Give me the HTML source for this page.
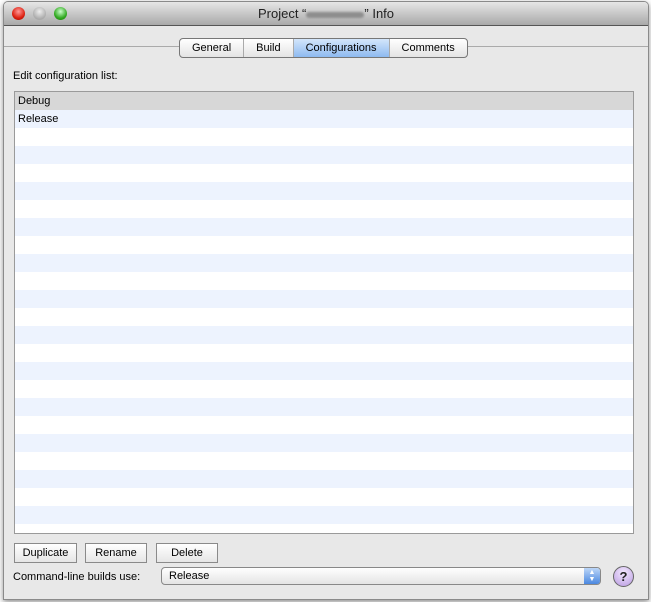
<!DOCTYPE html><html><head><style>
body{margin:0;width:651px;height:602px;background:#fff;font-family:"Liberation Sans",sans-serif;font-size:11px;position:relative;overflow:hidden}
.win{position:absolute;left:3px;top:1px;width:644px;height:597px;background:#e8e8e8;border:1px solid #8a8a8a;border-radius:5px 5px 0 0;box-shadow:0 2px 6px rgba(0,0,0,.45);overflow:hidden}
.tb{position:absolute;left:0;top:0;right:0;height:23px;background:linear-gradient(#e6e6e6,#a9a9a9);border-bottom:1px solid #555;text-align:center;line-height:23px;font-size:13px;color:#222}
.dot{position:absolute;top:5px;width:13px;height:13px;border-radius:50%}
.abs{position:absolute}
.tabs{position:absolute;left:175px;top:36px;height:18px;border:1px solid #777;border-radius:4px;background:linear-gradient(#fff,#e4e4e4);display:flex}
.tabs div{padding:0 12px;line-height:18px;border-left:1px solid #aaa}
.tabs div:first-child{border-left:none}
.tabs .sel{background:linear-gradient(#d4e6fb,#8ebaf0);}
.list{position:absolute;left:10px;top:89px;width:618px;height:441px;border:1px solid #9a9a9a;background:repeating-linear-gradient(#edf3fe 0 18px,#fff 18px 36px);background-position:0 18px;overflow:hidden}
.hdr{height:18px;background:#d7d7d7;line-height:18px;padding-left:3px}
.btn{position:absolute;top:541px;height:18px;border:1px solid #8a8a8a;background:linear-gradient(#fff,#e6e6e6);text-align:center;line-height:18px}
</style></head><body><div class="win">
<div class="tb">Project “<span style="display:inline-block;width:58px;height:6px;background:#8e8e8e;border-radius:3px;vertical-align:middle;filter:blur(1px)"></span>” Info</div>
<div class="dot" style="left:8px;background:radial-gradient(circle at 50% 35%,#f99,#d21 60%,#900)"></div>
<div class="dot" style="left:29px;background:radial-gradient(circle at 50% 35%,#eee,#aaa 70%)"></div>
<div class="dot" style="left:50px;background:radial-gradient(circle at 50% 35%,#cfc,#3a2 60%,#170)"></div>
<div class="abs" style="left:0;right:0;top:44px;border-top:1px solid #aaa"></div>
<div class="tabs"><div>General</div><div>Build</div><div class="sel">Configurations</div><div>Comments</div></div>
<div class="abs" style="left:9px;top:68px">Edit configuration list:</div>
<div class="list"><div class="hdr">Debug</div><div style="padding-left:3px;line-height:18px">Release</div></div>
<div class="btn" style="left:10px;width:61px">Duplicate</div>
<div class="btn" style="left:81px;width:60px">Rename</div>
<div class="btn" style="left:152px;width:60px">Delete</div>
<div class="abs" style="left:9px;top:569px">Command-line builds use:</div>
<div class="abs" style="left:157px;top:565px;width:431px;height:16px;border:1px solid #888;border-radius:4px;background:linear-gradient(#fff,#e4e4e4);line-height:16px;padding-left:7px;box-sizing:content-box">Release<div class="abs" style="right:0;top:0;width:16px;height:16px;background:linear-gradient(#bcd6f8,#4a88e0);border-radius:0 3px 3px 0;color:#fff;font-size:7px;line-height:7px;text-align:center;padding-top:1px;box-sizing:border-box">▲<br>▼</div></div>
<div class="abs" style="left:609px;top:564px;width:19px;height:19px;border-radius:50%;border:1px solid #666;background:radial-gradient(circle at 50% 30%,#f3e8ff,#b89ae0);text-align:center;line-height:19px;font-weight:bold;font-size:13px;color:#222">?</div>
</div></body></html>
